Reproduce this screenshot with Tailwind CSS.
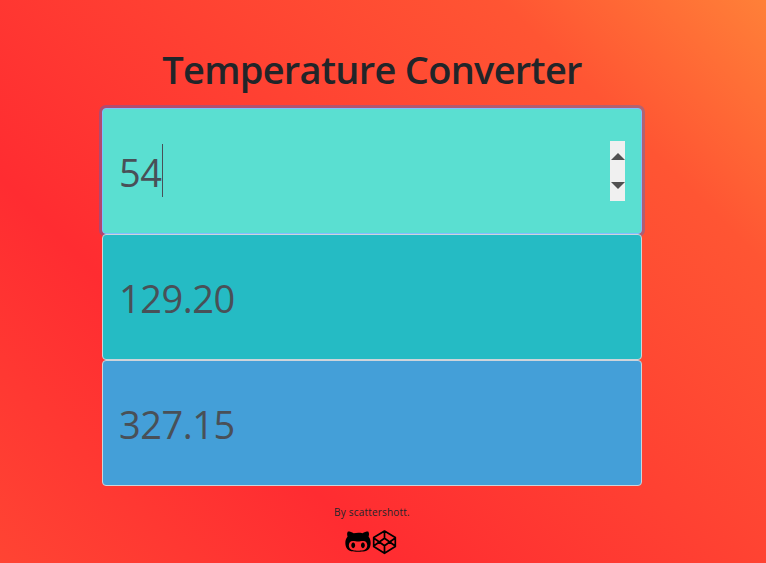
<!DOCTYPE html>
<html lang="en">
<head>
<meta charset="utf-8">
<title>Temperature Converter</title>
<script src="https://cdn.jsdelivr.net/npm/@tailwindcss/browser@4"></script>
</head>
<body class="h-[563px] overflow-hidden bg-[linear-gradient(225deg,#ff8038_0%,#ff5533_20%,#ff2c31_71%,#ff4433_100%)] font-['Open_Sans','Noto_Sans',sans-serif] text-[#212529]">
<main class="ml-[102px] flex w-[540px] flex-col items-center pt-[45px]">
  <h1 class="mb-[15px] h-12 whitespace-nowrap text-[38px] leading-[48px] font-[560] tracking-[-0.7px]">Temperature Converter</h1>
  <div class="relative flex h-[126px] w-full items-center rounded border border-[#80bdff] bg-[#5adfd1] px-4 text-[#495057] shadow-[0_0_0_3px_rgba(0,123,255,0.3)]">
    <span class="pt-[3px] text-[38px] tracking-[-0.5px]">54</span>
    <span class="mb-[2px] ml-px h-[53px] w-px bg-[#495057]"></span>
    <span class="ml-auto flex h-[60px] w-[15px] flex-col items-center justify-between bg-[#f0f0f0] py-3">
      <svg class="h-[7px] w-[14px]" viewBox="0 0 14 7"><path d="M0 7L7 0L14 7Z" fill="#505050"/></svg>
      <svg class="h-[7px] w-[14px]" viewBox="0 0 14 7"><path d="M0 0L7 7L14 0Z" fill="#505050"/></svg>
    </span>
  </div>
  <div class="relative flex h-[126px] w-full items-center rounded border border-[#ced4da] bg-[#25bbc4] px-4 pt-[3px] text-[38px] tracking-[-0.5px] text-[#495057]"><span>129.20</span></div>
  <div class="relative flex h-[126px] w-full items-center rounded border border-[#ced4da] bg-[#449fd8] px-4 pt-[3px] text-[38px] tracking-[-0.5px] text-[#495057]"><span>327.15</span></div>
  <p class="mt-[18px] text-[10px] leading-4 tracking-[0.2px]">By scattershott.</p>
  <div class="mt-[8px] mr-[2px] flex items-center gap-px">
    <svg class="h-[27px] w-[26px]" viewBox="0 0 480 512"><path d="M186.100 328.700c0 20.900-10.900 55.100-36.700 55.100s-36.700-34.200-36.700-55.100 10.900-55.100 36.700-55.100 36.700 34.200 36.700 55.100zM480 278.200c0 31.900-3.200 65.700-17.500 95-37.900 76.600-142.100 74.800-216.700 74.800-75.800 0-186.200 2.700-225.600-74.800-14.600-29-20.200-63.100-20.200-95 0-41.900 13.900-81.500 41.500-113.600-5.200-15.800-7.700-32.400-7.700-48.800 0-21.500 4.900-32.300 14.600-51.800 45.300 0 74.300 9 108.800 36 29-6.900 58.800-10 88.700-10 27 0 54.200 2.900 80.400 9.200 34-26.700 63-35.200 107.800-35.200 9.800 19.500 14.600 30.300 14.600 51.800 0 16.400-2.600 32.700-7.700 48.200 27.500 32.400 39 72.300 39 114.200zm-64.300 50.500c0-43.900-26.700-82.600-73.500-82.600-18.900 0-37 3.400-56 6-14.900 2.300-29.800 3.200-45.100 3.200-15.200 0-30.100-.9-45.100-3.200-18.700-2.600-37-6-56-6-46.800 0-73.500 38.700-73.500 82.600 0 87.800 80.400 101.300 150.400 101.300h48.200c70.300 0 150.600-13.400 150.600-101.300zm-82.600-55.100c-25.800 0-36.700 34.200-36.700 55.100s10.900 55.100 36.700 55.100 36.700-34.200 36.700-55.100-10.900-55.100-36.700-55.100z"/></svg>
    <svg class="h-[26px] w-[25px]" viewBox="0 0 25 26" fill="none" stroke="#000" stroke-width="1.700" stroke-linejoin="round"><path d="M12.500 2L23.300 8.500V17.500L12.500 24.300L1.700 17.500V8.500ZM12.500 2V9.300M12.500 16.700V24.300M1.700 9L12.500 16.700L23.300 9M1.700 17L12.500 9.300L23.300 17"/></svg>
  </div>
</main>
</body>
</html>
